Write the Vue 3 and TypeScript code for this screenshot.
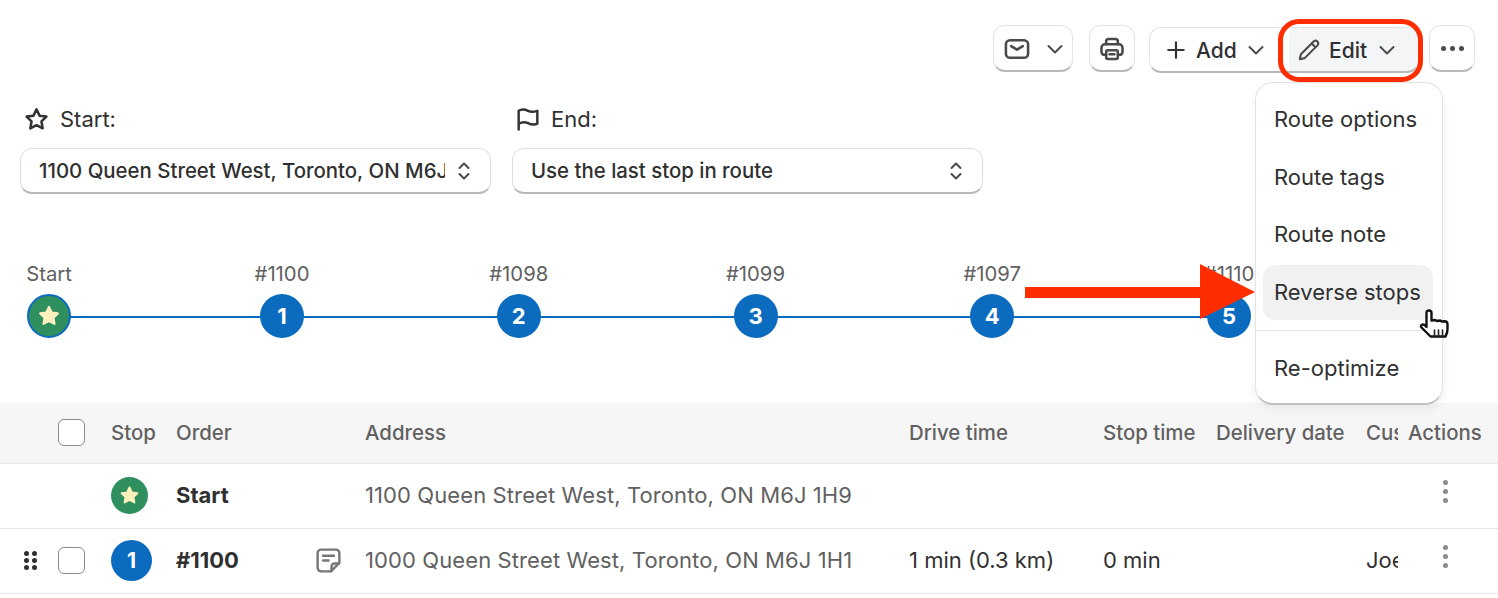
<script setup lang="ts">
const stops = [
  { label: '#1100', n: 1 },
  { label: '#1098', n: 2 },
  { label: '#1099', n: 3 },
  { label: '#1097', n: 4 },
  { label: '#1110', n: 5 },
]

const menuTop = ['Route options', 'Route tags', 'Route note', 'Reverse stops']

const starPath = 'M12 3.6l2.5 5.2 5.7.8-4.1 4 1 5.7-5.1-2.7-5.1 2.7 1-5.7-4.1-4 5.7-.8z'
</script>

<template>
  <div class="page">
    <div class="toolbar">
      <button class="btn mail">
        <svg width="28" height="28" viewBox="0 0 24 24" fill="none" stroke="#4a4a4a" stroke-width="2.200" stroke-linecap="round" stroke-linejoin="round"><rect x="2.500" y="4.500" width="19" height="15" rx="3.500" /><path d="M7 9.500l5 3 5-3" /></svg>
        <svg class="chev" width="20" height="20" viewBox="0 0 20 20" fill="none" stroke="#4a4a4a" stroke-width="2" stroke-linecap="round" stroke-linejoin="round"><path d="M3.500 7l6.500 6.500L16.500 7" /></svg>
      </button>
      <button class="btn print">
        <svg width="28" height="28" viewBox="0 0 24 24" fill="none" stroke="#4a4a4a" stroke-width="2.200" stroke-linecap="round" stroke-linejoin="round"><path d="M7 8V5.500A2 2 0 0 1 9 3.500h6a2 2 0 0 1 2 2V8" /><path d="M7 17H5.500A2.500 2.500 0 0 1 3 14.500V11a3 3 0 0 1 3-3h12a3 3 0 0 1 3 3v3.500a2.500 2.500 0 0 1-2.500 2.500H17" /><rect x="7" y="13" width="10" height="7.500" rx="1.500" /><path d="M10 16.500h4" /></svg>
      </button>
      <div class="split">
        <button class="btn add">
          <svg width="22" height="22" viewBox="0 0 20 20" fill="none" stroke="#333" stroke-width="2" stroke-linecap="round"><path d="M10 3v14M3 10h14" /></svg>
          <span>Add</span>
          <svg class="chev" width="20" height="20" viewBox="0 0 20 20" fill="none" stroke="#4a4a4a" stroke-width="2" stroke-linecap="round" stroke-linejoin="round"><path d="M3.500 7l6.500 6.500L16.500 7" /></svg>
        </button>
        <button class="btn edit">
          <svg width="26" height="26" viewBox="0 0 24 24" fill="none" stroke="#4a4a4a" stroke-width="1.900" stroke-linecap="round" stroke-linejoin="round"><path d="M3.500 20.500l1-4.500L16.500 4a2.500 2.500 0 0 1 3.500 3.500L8 19.500z" /><path d="M14.500 6l3.500 3.500" /></svg>
          <span>Edit</span>
          <svg class="chev" width="20" height="20" viewBox="0 0 20 20" fill="none" stroke="#4a4a4a" stroke-width="2" stroke-linecap="round" stroke-linejoin="round"><path d="M3.500 7l6.500 6.500L16.500 7" /></svg>
          <span class="ring"></span>
        </button>
      </div>
      <button class="btn more" aria-label="More">
        <i></i><i></i><i></i>
      </button>
    </div>

    <div class="pickers">
      <div class="picker">
        <div class="picker-label">
          <svg width="29" height="29" viewBox="0 0 24 24" fill="none" stroke="#333" stroke-width="2.100" stroke-linejoin="round"><path :d="starPath" /></svg>
          <span>Start:</span>
        </div>
        <div class="select">
          <span class="select-text">1100 Queen Street West, Toronto, ON M6J 1H9</span>
          <svg width="18" height="24" viewBox="0 0 18 24" fill="none" stroke="#4a4a4a" stroke-width="2" stroke-linecap="round" stroke-linejoin="round"><path d="M4.500 9L9 4.500 13.500 9M4.500 15L9 19.500 13.500 15" /></svg>
        </div>
      </div>
      <div class="picker">
        <div class="picker-label">
          <svg width="28" height="28" viewBox="0 0 24 24" fill="none" stroke="#333" stroke-width="2.100" stroke-linecap="round" stroke-linejoin="round"><path d="M4 21V5c3-2 5-1.500 8 0s5 1 8 0v11c-3 1.500-5 1-8-.5s-5-1-8 .5" /></svg>
          <span>End:</span>
        </div>
        <div class="select">
          <span class="select-text">Use the last stop in route</span>
          <svg width="18" height="24" viewBox="0 0 18 24" fill="none" stroke="#4a4a4a" stroke-width="2" stroke-linecap="round" stroke-linejoin="round"><path d="M4.500 9L9 4.500 13.500 9M4.500 15L9 19.500 13.500 15" /></svg>
        </div>
      </div>
    </div>

    <div class="timeline">
      <div class="node first">
        <span class="node-label">Start</span>
        <span class="dot dot-start">
          <svg width="26" height="26" viewBox="0 0 24 24" fill="#fbf1bd" stroke="#fbf1bd" stroke-width="2" stroke-linejoin="round"><path :d="starPath" /></svg>
        </span>
      </div>
      <div v-for="s in stops" :key="s.n" class="node">
        <span class="node-label">{{ s.label }}</span>
        <span class="dot">{{ s.n }}</span>
      </div>
    </div>

    <div class="table">
      <div class="row head">
        <div></div>
        <div><span class="check"></span></div>
        <div>Stop</div>
        <div>Order</div>
        <div>Address</div>
        <div>Drive time</div>
        <div>Stop time</div>
        <div>Delivery date</div>
        <div class="clip">Customer</div>
        <div>Actions</div>
      </div>
      <div class="row body">
        <div></div>
        <div></div>
        <div>
          <span class="badge badge-start">
            <svg width="23" height="23" viewBox="0 0 24 24" fill="#fbf1bd" stroke="#fbf1bd" stroke-width="2" stroke-linejoin="round"><path :d="starPath" /></svg>
          </span>
        </div>
        <div class="order">Start</div>
        <div class="address">1100 Queen Street West, Toronto, ON M6J 1H9</div>
        <div></div>
        <div></div>
        <div></div>
        <div></div>
        <div class="kebab"><i></i><i></i><i></i></div>
      </div>
      <div class="row body">
        <div class="grip">
          <i v-for="n in 6" :key="n"></i>
        </div>
        <div><span class="check"></span></div>
        <div><span class="badge">1</span></div>
        <div class="order with-note">
          <span>#1100</span>
          <svg width="29" height="29" viewBox="0 0 24 24" fill="none" stroke="#767676" stroke-width="2" stroke-linecap="round" stroke-linejoin="round"><path d="M14 21H6a3 3 0 0 1-3-3V6a3 3 0 0 1 3-3h12a3 3 0 0 1 3 3v8z" /><path d="M7.500 8h9M7.500 12h4.500M14.500 20.500V17a2.500 2.500 0 0 1 2.500-2.500h3.500" /></svg>
        </div>
        <div class="address">1000 Queen Street West, Toronto, ON M6J 1H1</div>
        <div class="dark">1 min (0.3 km)</div>
        <div class="dark">0 min</div>
        <div></div>
        <div class="clip dark">Joe Smith</div>
        <div class="kebab"><i></i><i></i><i></i></div>
      </div>
    </div>

    <div class="menu">
      <div class="menu-group">
        <div v-for="m in menuTop" :key="m" class="menu-item" :class="{ active: m === 'Reverse stops' }">{{ m }}</div>
      </div>
      <div class="menu-group last">
        <div class="menu-item">Re-optimize</div>
      </div>
    </div>

    <svg class="arrow" width="230" height="55" viewBox="0 0 230 55"><path d="M0 23h175V0l55 28-55 27V34H0z" fill="#ff2d00" /></svg>

    <svg class="cursor" width="34" height="38" viewBox="0 0 34 38"><path d="M8.500 19V5a2.500 2.500 0 0 1 5 0v7.500l4-.5 1 1 4-.5 1 1 3-.3c2 0 3 1 3 3v5c0 3-1 5-2 7.300H12.500L3.500 19.500c-1.500-2 1-4 3-2.500z" fill="#fff" stroke="#111" stroke-width="2.400" stroke-linejoin="round" /><path d="M16.500 22v7M20.500 22v7M24.500 22v7" stroke="#222" stroke-width="1.600" stroke-linecap="round" /></svg>
  </div>
</template>

<style>
html, body { margin: 0; background: #fff; }
</style>

<style scoped>
.page {
  position: relative;
  width: 1498px;
  height: 598px;
  overflow: hidden;
  box-sizing: border-box;
  padding-top: 25px;
  font-family: Inter, "Liberation Sans", sans-serif;
  font-size: 22px;
  color: #303030;
}

.toolbar {
  display: flex;
  justify-content: flex-end;
  align-items: flex-start;
  height: 48px;
  padding-right: 23px;
}

.btn {
  display: flex;
  align-items: center;
  height: 47px;
  box-sizing: border-box;
  padding: 0;
  border: 1px solid #e3e3e3;
  border-bottom: 2px solid #b9b9b9;
  border-radius: 12px;
  background: #fff;
  color: #303030;
  font: 500 21px Inter, "Liberation Sans", sans-serif;
}

.mail { width: 80px; padding: 2px 0 0 9px; gap: 14px; margin-right: 16px; }
.print { width: 46px; padding-top: 2px; justify-content: center; margin-right: 14px; }
.split { display: flex; margin-top: 2px; margin-right: 10px; }
.add {
  width: 140px;
  height: 46px;
  padding: 1px 0 0 15px;
  gap: 9px;
  border-right: none;
  border-radius: 12px 0 0 12px;
}
.edit {
  position: relative;
  width: 130px;
  height: 46px;
  padding: 1px 0 0 7px;
  gap: 7px;
  background: #f4f5f6;
  border-radius: 0 12px 12px 0;
  border-left: none;
}
.edit .chev { margin-left: 3px; }
.ring {
  position: absolute;
  left: -11px;
  right: -5px;
  top: -9px;
  bottom: -11px;
  border: 5px solid #ff2d00;
  border-radius: 21px;
}
.more { width: 46px; justify-content: center; gap: 4px; }
.more i { width: 5px; height: 5px; border-radius: 50%; background: #4a4a4a; }

.pickers {
  display: flex;
  gap: 21px;
  margin-top: 32px;
  padding-left: 20px;
}
.picker { width: 471px; }
.picker-label {
  display: flex;
  align-items: center;
  gap: 9px;
  height: 28px;
  margin-left: 2px;
  margin-bottom: 15px;
}
.select {
  display: flex;
  align-items: center;
  justify-content: space-between;
  box-sizing: border-box;
  height: 46px;
  padding: 0 17px 0 18px;
  border: 1px solid #dedede;
  border-bottom: 2px solid #b9b9b9;
  border-radius: 12px;
  font-size: 20.400px;
  font-weight: 500;
}
.select-text {
  width: 406px;
  overflow: hidden;
  white-space: nowrap;
}

.timeline {
  display: flex;
  margin-top: 66px;
  padding-left: 27px;
  background: linear-gradient(#0a6cbd, #0a6cbd) no-repeat 49px 56px / 1180px 2px;
  height: 80px;
}
.node {
  display: flex;
  flex-direction: column;
  align-items: center;
  width: 44px;
  margin-right: 192.750px;
}
.node.first { margin-right: 189px; }
.node-label {
  height: 34px;
  line-height: 28px;
  white-space: nowrap;
  font-size: 20.300px;
  color: #616161;
}
.dot {
  display: flex;
  align-items: center;
  justify-content: center;
  flex: none;
  width: 44px;
  height: 44px;
  border-radius: 50%;
  background: #0b6cbf;
  color: #fff;
  font-weight: 700;
  font-size: 22px;
}
.dot-start {
  box-sizing: border-box;
  background: #2f8f5f;
  border: 2px solid #0b6cbf;
}

.table { margin-top: 63px; }
.row {
  display: grid;
  box-sizing: border-box;
  grid-template-columns: 58px 53px 65px 189px 544px 194px 113px 150px 42px 90px;
  align-items: center;
  padding-bottom: 2px;
  border-bottom: 1px solid #e6e6e6;
  white-space: nowrap;
}
.head { height: 61px; background: #f6f6f6; color: #616161; font-weight: 500; font-size: 20.400px; }
.body { height: 65px; color: #616161; }
.address { letter-spacing: 0.1px; }
.dark { color: #303030; }
.clip { width: 32px; overflow: hidden; }
.check {
  display: block;
  box-sizing: border-box;
  width: 27px;
  height: 27px;
  border: 1px solid #8a8a8a;
  border-radius: 6px;
  background: #fff;
}
.badge {
  display: flex;
  align-items: center;
  justify-content: center;
  width: 41px;
  height: 41px;
  border-radius: 50%;
  background: #0b6cbf;
  color: #fff;
  font-weight: 700;
  font-size: 21px;
}
.badge-start { width: 37px; height: 37px; background: #2f8f5f; }
.order { font-weight: 700; color: #303030; }
.with-note { display: flex; align-items: center; justify-content: space-between; padding-right: 22px; }
.grip {
  display: grid;
  grid-template-columns: 5px 5px;
  gap: 2px 3px;
  justify-content: center;
  padding-left: 2px;
}
.grip i { width: 5px; height: 5px; border-radius: 50%; background: #303030; }
.kebab {
  display: flex;
  flex-direction: column;
  align-items: center;
  gap: 4px;
  padding-right: 16px;
  margin-top: -8px;
}
.kebab i { width: 5px; height: 5px; border-radius: 50%; background: #8a8a8a; }

.menu {
  position: absolute;
  left: 1255px;
  top: 82px;
  box-sizing: border-box;
  width: 188px;
  height: 323px;
  padding: 9px 9px 0 7px;
  background: #fff;
  border: 1px solid #e3e3e3;
  border-bottom: 2px solid #c2c2c2;
  border-radius: 18px;
  box-shadow: 0 4px 10px rgba(0, 0, 0, 0.06);
}
.menu-group { display: flex; flex-direction: column; }
.menu-group.last { border-top: 1px solid #e6e6e6; margin: 10px -9px 0 -7px; padding: 10px 9px 0 7px; }
.menu-item {
  height: 55px;
  line-height: 55px;
  margin-bottom: 2.670px;
  padding-left: 11px;
  border-radius: 12px;
  white-space: nowrap;
  color: #303030;
}
.menu-group .menu-item:last-child { margin-bottom: 0; }
.menu-item.active { background: #f1f1f1; }

.arrow { position: absolute; left: 1025px; top: 264px; }
.cursor { position: absolute; left: 1418px; top: 308px; }
</style>
